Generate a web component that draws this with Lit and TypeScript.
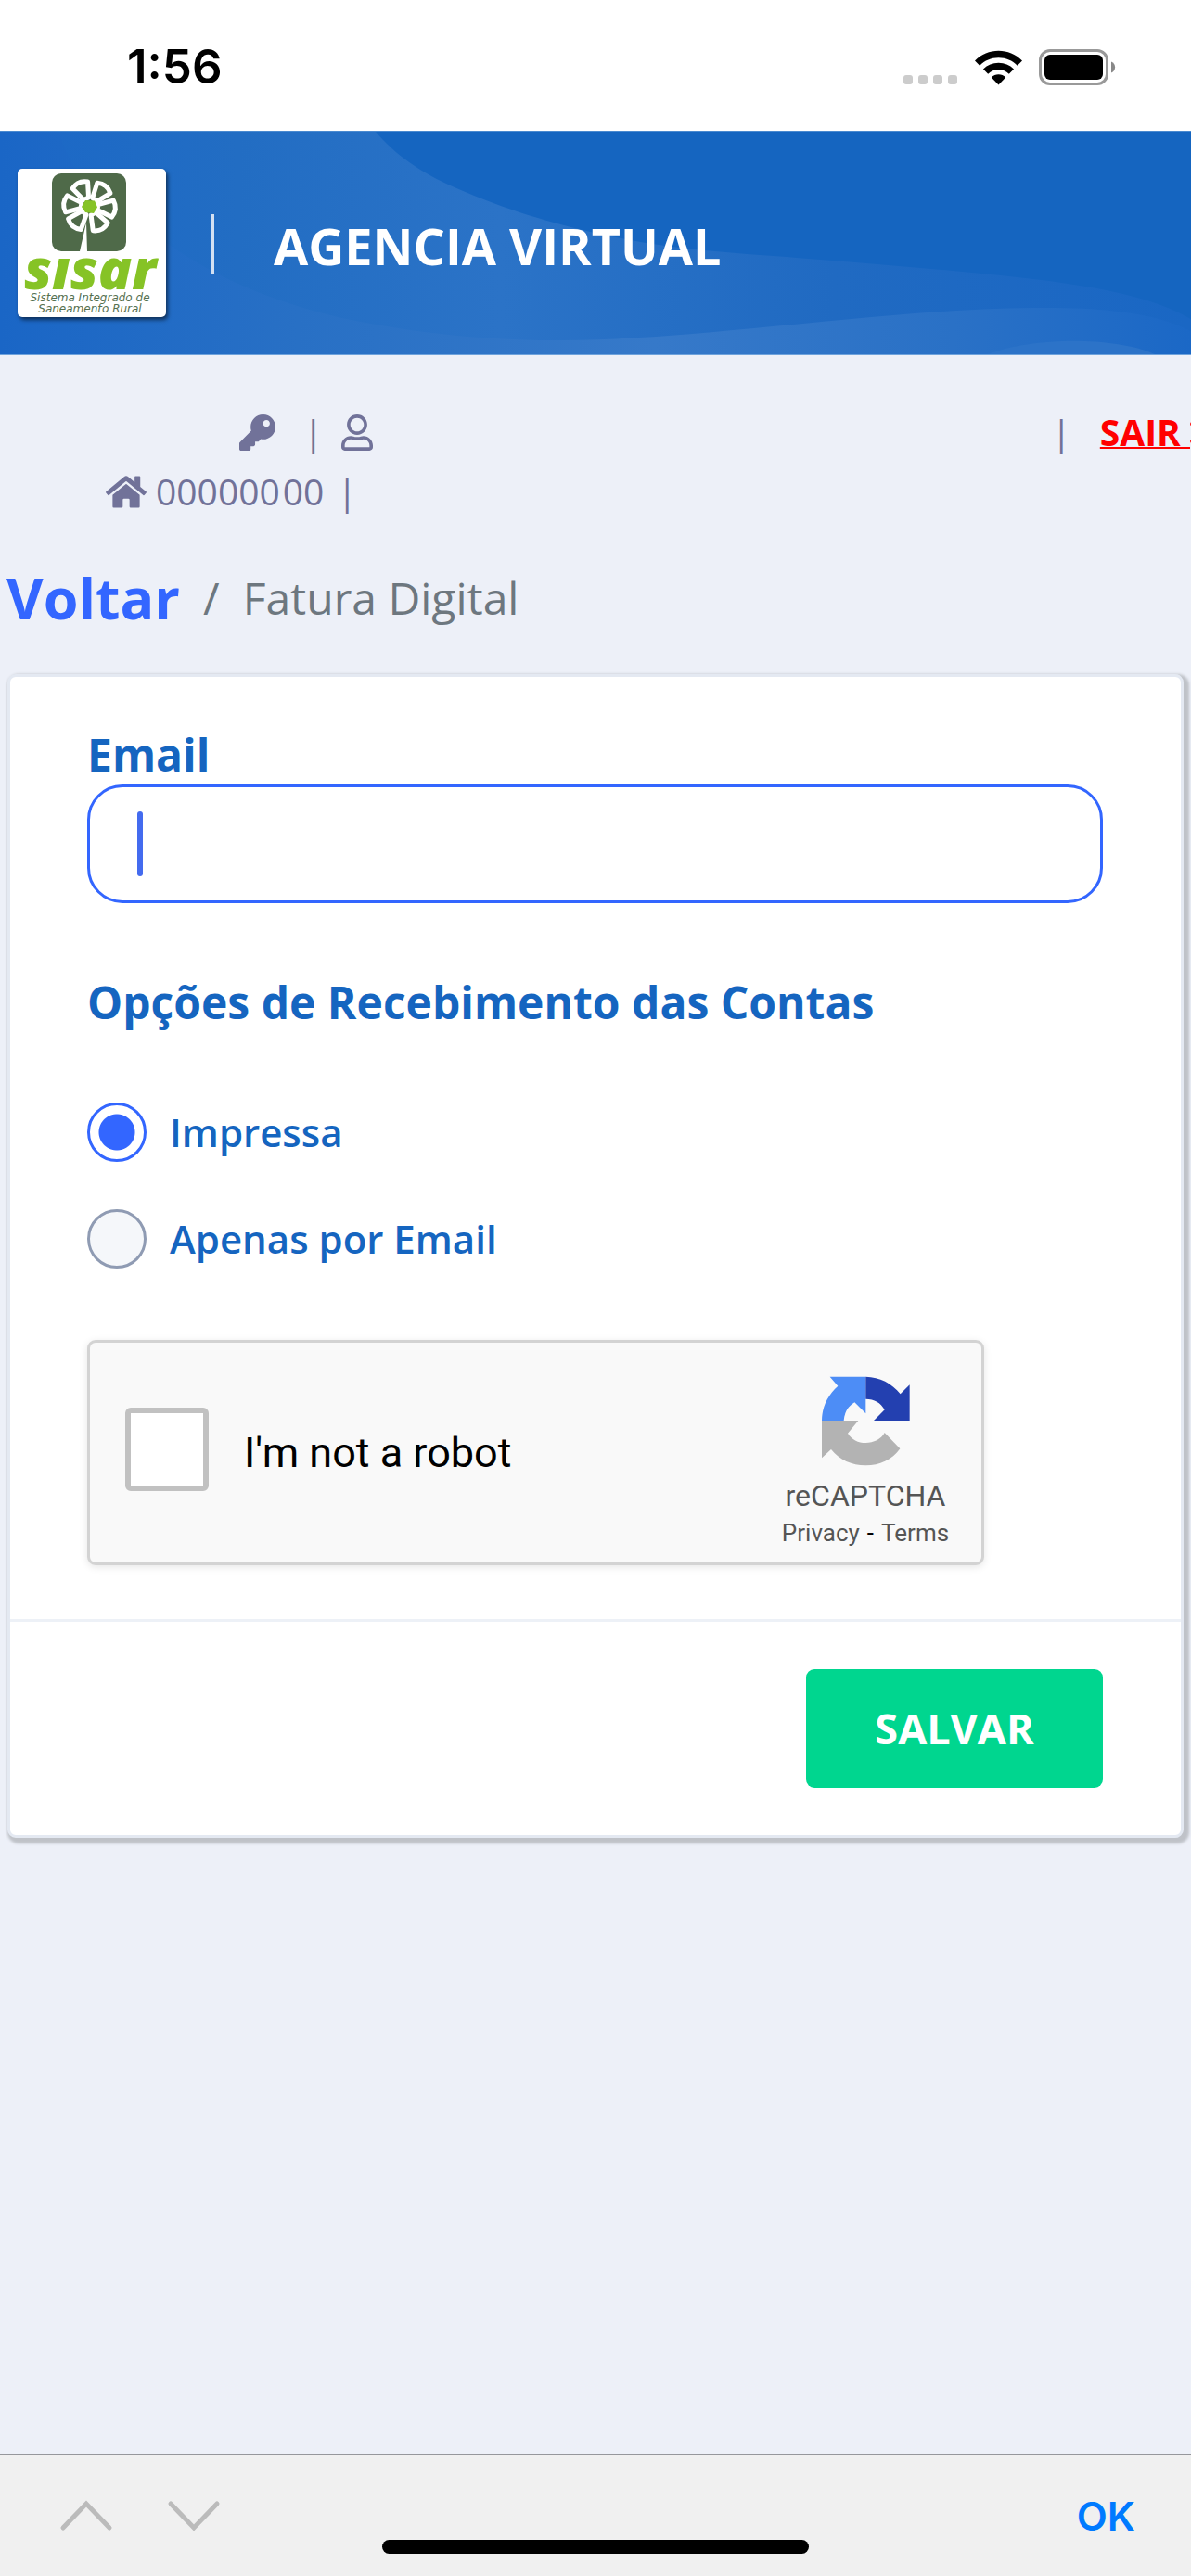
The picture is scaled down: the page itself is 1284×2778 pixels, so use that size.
import { LitElement, html, css, svg } from "lit";
import { customElement, state } from "lit/decorators.js";

const KEY_PATH =
  "M512 176.001C512 273.203 433.202 352 336 352c-11.22 0-22.19-1.062-32.827-3.069l-24.012 27.014A23.999 23.999 0 0 1 261.223 384H224v40c0 13.255-10.745 24-24 24h-40v40c0 13.255-10.745 24-24 24H24c-13.255 0-24-10.745-24-24v-78.059c0-6.365 2.529-12.47 7.029-16.971l161.802-161.802C163.108 213.814 160 195.271 160 176 160 78.798 238.797.001 335.999 0 433.488-.001 512 78.511 512 176.001zM336 128c0 26.51 21.49 48 48 48s48-21.49 48-48-21.49-48-48-48-48 21.49-48 48z";
const USER_PATH =
  "M313.6 304c-28.7 0-42.5 16-89.6 16-47.1 0-60.8-16-89.6-16C60.2 304 0 364.2 0 438.4V464c0 26.5 21.5 48 48 48h352c26.5 0 48-21.5 48-48v-25.6c0-74.2-60.2-134.4-134.4-134.4zM400 464H48v-25.6c0-47.6 38.8-86.4 86.4-86.4 14.6 0 38.3 16 89.6 16 51.7 0 74.9-16 89.6-16 47.6 0 86.4 38.8 86.4 86.4V464zM224 288c79.5 0 144-64.5 144-144S303.5 0 224 0 80 64.5 80 144s64.5 144 144 144zm0-240c52.9 0 96 43.1 96 96s-43.1 96-96 96-96-43.1-96-96 43.1-96 96-96z";
const HOME_PATH =
  "M280.37 148.26L96 300.11V464a16 16 0 0 0 16 16l112.06-.29a16 16 0 0 0 15.92-16V368a16 16 0 0 1 16-16h64a16 16 0 0 1 16 16v95.64a16 16 0 0 0 16 16.05L464 480a16 16 0 0 0 16-16V300L295.67 148.26a12.19 12.19 0 0 0-15.3 0zM571.6 251.47L488 182.56V44.05a12 12 0 0 0-12-12h-56a12 12 0 0 0-12 12v72.61L318.47 43a48 48 0 0 0-61 0L4.34 251.47a12 12 0 0 0-1.6 16.9l25.5 31A12 12 0 0 0 45.15 301l235.22-193.74a12.19 12.19 0 0 1 15.3 0L530.9 301a12 12 0 0 0 16.9-1.6l25.5-31a12 12 0 0 0-1.7-16.93z";
const TIMES_PATH =
  "M242.72 256l100.07-100.07c12.28-12.28 12.28-32.19 0-44.48l-22.24-22.24c-12.28-12.28-32.19-12.28-44.48 0L176 189.28 75.93 89.21c-12.28-12.28-32.19-12.28-44.48 0L9.21 111.45c-12.28 12.28-12.28 32.19 0 44.48L109.28 256 9.21 356.07c-12.28 12.28-12.28 32.19 0 44.48l22.24 22.24c12.28 12.28 32.2 12.28 44.48 0L176 322.72l100.07 100.07c12.28 12.28 32.2 12.28 44.48 0l22.24-22.24c12.28-12.28 12.28-32.19 0-44.48L242.72 256z";

@customElement("status-bar")
export class StatusBar extends LitElement {
  static styles = css`
    :host {
      display: flex;
      align-items: center;
      justify-content: space-between;
      height: 141px;
      padding: 2px 81px 0 137px;
      box-sizing: border-box;
      background: #fff;
      color: #000;
    }
    .time {
      font: 600 51px/60px Inter, "Liberation Sans", sans-serif;
    }
    .signals {
      display: flex;
      align-items: center;
      gap: 18px;
      padding-top: 2px;
    }
    svg {
      display: block;
    }
  `;

  render() {
    return html`
      <span class="time">1:56</span>
      <div class="signals">
        <svg width="59" height="38" viewBox="0 0 59 38" fill="#ccc" aria-hidden="true">
          ${[0, 16, 32, 48].map((x) => svg`<rect x=${x} y="27" width="10" height="10" rx="3" />`)}
        </svg>
        <svg width="51" height="38" viewBox="0 0 51 38" aria-hidden="true">
          <path d="M0 11.500C7 4.500 16 .8 25.500 .8S44 4.500 51 11.500L45.800 16.700C40.300 11.300 33.500 8.300 25.500 8.300S10.700 11.300 5.200 16.700Z" />
          <path d="M9 20.500C13.500 16 19 13.700 25.500 13.700S37.500 16 42 20.500L36.800 25.700C33.600 22.600 30 21 25.500 21S17.400 22.600 14.200 25.700Z" />
          <path d="M17.800 29.500C20 27.400 22.500 26.300 25.500 26.300S31 27.400 33.200 29.500L25.500 37.500Z" />
        </svg>
        <svg width="83" height="39" viewBox="0 0 83 39" aria-hidden="true">
          <rect x="1.500" y="1.500" width="72" height="36" rx="10.500" fill="none" stroke="#999" stroke-width="3" />
          <rect x="6" y="6" width="63" height="27" rx="6" />
          <path d="M78 13.500C83.500 15.500 83.500 23.500 78 25.500Z" fill="#888" />
        </svg>
      </div>
    `;
  }
}

@customElement("agency-header")
export class AgencyHeader extends LitElement {
  static styles = css`
    :host {
      display: block;
      font-family: "Open Sans", sans-serif;
    }
    .banner {
      position: relative;
      display: flex;
      align-items: center;
      height: 242px;
      box-sizing: border-box;
      padding: 0 19px;
      background: #1565c0;
      border-top: 1px solid #4a8ad0;
      border-bottom: 1px solid #6fa3dc;
    }
    .waves {
      position: absolute;
      inset: 0;
      width: 100%;
      height: 100%;
    }
    .logo,
    .divider,
    .title {
      position: relative;
    }
    .logo {
      display: block;
      border-radius: 5px;
      background: #fff;
      box-shadow: 2px 3px 4px rgba(0, 0, 0, 0.55);
    }
    .divider {
      width: 3px;
      height: 64px;
      margin: 2px 64px 0 49px;
      background: #d3e0f2;
    }
    .title {
      margin: 5px 0 0;
      color: #fff;
      font-size: 54px;
      font-weight: 700;
      line-height: 72px;
      white-space: nowrap;
    }
    .brand {
      font: italic 800 60px "Open Sans", sans-serif;
      fill: #86c326;
    }
    .tagline {
      font: italic 12px "DejaVu Sans", sans-serif;
      fill: #55704f;
    }
  `;

  render() {
    const petal = "M-3 -9L-9 -25Q0 -31 9 -25L3 -9Z";
    return html`
      <header class="banner">
        <svg class="waves" viewBox="0 141 1284 242" preserveAspectRatio="none" aria-hidden="true">
          <defs>
            <linearGradient id="upper" x1="0" x2="1">
              <stop offset="0" stop-color="#1b68c7" />
              <stop offset=".2" stop-color="#226dc3" />
              <stop offset=".42" stop-color="#2b73c7" />
              <stop offset=".7" stop-color="#206ac2" />
              <stop offset="1" stop-color="#1a67c4" />
            </linearGradient>
            <linearGradient id="lower" x1="0" x2="1">
              <stop offset="0" stop-color="#1a66c6" />
              <stop offset=".25" stop-color="#2870c5" />
              <stop offset=".55" stop-color="#3679c9" />
              <stop offset=".8" stop-color="#2a71c6" />
              <stop offset="1" stop-color="#1b68c6" />
            </linearGradient>
          </defs>
          <path fill="url(#upper)" d="M0 141H405C425 165 452 185 491 202C545 226 610 247 696 262C740 269 780 272 819 275C900 281 960 286 1024 292C1130 302 1230 312 1284 345V383H0Z" />
          <path fill="url(#lower)" d="M0 141H64C75 190 120 232 184 265C235 300 290 325 370 344C460 363 540 368 606 368C720 367 850 350 960 341C1060 332 1150 330 1200 336C1240 340 1265 348 1284 358V383H0Z" />
          <path fill="#2c73c8" d="M1065 383C1110 365 1200 363 1245 383Z" />
        </svg>
        <svg class="logo" width="160" height="160" viewBox="0 0 160 160" role="img" aria-label="Sisar">
          <rect x="37" y="5" width="80" height="84" rx="10" fill="#4f6a49" />
          <path d="M67 89L74 58L75 89Z" fill="#fff" />
          <g fill="#4f6a49" stroke="#fff" stroke-width="5" stroke-linejoin="round">
            ${[-24, 38, 96, 152, 220, 276].map(
              (a) => svg`<path d=${petal} transform="translate(77.500 40.500) rotate(${a})" />`
            )}
          </g>
          <path d="M73 34L83 34.500L86 41.500L82 48L73 47L69 41Z" fill="#86c326" />
          <text class="brand" x="7" y="130">sısar</text>
          <text class="tagline" x="78" y="143" text-anchor="middle">Sistema Integrado de</text>
          <text class="tagline" x="78" y="155" text-anchor="middle">Saneamento Rural</text>
        </svg>
        <span class="divider"></span>
        <h1 class="title">AGENCIA VIRTUAL</h1>
      </header>
    `;
  }
}

@customElement("account-strip")
export class AccountStrip extends LitElement {
  static styles = css`
    :host {
      display: block;
      overflow: hidden;
      padding-top: 51px;
      color: #717299;
      font: 400 39px/64px "Open Sans", sans-serif;
    }
    .row {
      display: flex;
      align-items: center;
      white-space: nowrap;
    }
    .user-row {
      padding-left: 258px;
    }
    .home-row {
      padding-left: 114px;
    }
    svg {
      display: block;
      fill: currentColor;
    }
    .user-row > .bar {
      margin: 0 20px 0 30px;
    }
    .home-row > .bar {
      margin-left: 14px;
    }
    .code {
      display: flex;
      gap: 3px;
      padding-left: 10px;
    }
    .exit {
      display: flex;
      align-items: center;
      margin: 0 -26px 0 auto;
    }
    .exit-link {
      display: flex;
      align-items: center;
      margin-left: 31px;
      color: #f00;
      font-weight: 700;
      white-space: pre;
      text-decoration: underline;
      text-decoration-thickness: 2px;
    }
    .crumbs {
      display: flex;
      align-items: center;
      gap: 25px;
      margin: 40px 0 39px;
      padding-left: 7px;
      color: #6d777f;
      font-size: 48px;
      line-height: 86px;
    }
    .back {
      color: #36f;
      font-size: 61px;
      font-weight: 700;
      text-decoration: none;
    }
  `;

  render() {
    return html`
      <div class="row user-row">
        <svg width="39" height="39" viewBox="0 0 512 512" aria-hidden="true"><path d=${KEY_PATH} /></svg>
        <span class="bar">|</span>
        <svg width="34" height="39" viewBox="0 0 448 512" aria-hidden="true"><path d=${USER_PATH} /></svg>
        <div class="exit">
          <span>|</span>
          <a class="exit-link" href="#sair"><span>SAIR </span><svg width="27" height="39" viewBox="0 0 352 512" aria-hidden="true"><path d=${TIMES_PATH} /></svg></a>
        </div>
      </div>
      <div class="row home-row">
        <svg width="44" height="39" viewBox="0 0 576 512" aria-hidden="true"><path d=${HOME_PATH} /></svg>
        <span class="code"><span>000000</span><span>00</span></span>
        <span class="bar">|</span>
      </div>
      <nav class="crumbs">
        <a class="back" href="#voltar">Voltar</a>
        <span>/</span>
        <span>Fatura Digital</span>
      </nav>
    `;
  }
}

@customElement("captcha-box")
export class CaptchaBox extends LitElement {
  static styles = css`
    :host {
      display: flex;
      align-items: center;
      width: 967px;
      max-width: 100%;
      height: 243px;
      box-sizing: border-box;
      padding: 0 24px 0 38px;
      border: 3px solid #d3d3d3;
      border-radius: 9px;
      background: #f9f9f9;
      box-shadow: 0 2px 8px rgba(0, 0, 0, 0.1);
      color: #555;
      font-family: Roboto, sans-serif;
    }
    .check {
      appearance: none;
      width: 90px;
      height: 90px;
      margin: 0 38px 8px 0;
      border: 6px solid #c1c1c1;
      border-radius: 6px;
      background: #fff;
    }
    .label {
      color: #000;
      font-size: 45px;
      line-height: 54px;
    }
    .mark {
      display: flex;
      flex-direction: column;
      align-items: center;
      width: 202px;
      margin-left: auto;
      padding-top: 22px;
    }
    .name,
    .links {
      line-height: 36px;
      white-space: nowrap;
    }
    .name {
      margin: 12px 0 4px;
      font-size: 32px;
    }
    .links {
      display: flex;
      gap: 8px;
      color: #000;
      font-size: 26px;
    }
    .links a {
      color: #555;
      text-decoration: none;
    }
  `;

  render() {
    return html`
      <input class="check" id="human" type="checkbox" />
      <label class="label" for="human">I'm not a robot</label>
      <div class="mark">
        <svg width="97" height="99" viewBox="255 129 291 297" aria-hidden="true">
          <path fill="#4d8df6" d="M284 131H400V250L364 214C345 225 331 245 329 273H258C258 230 277 190 310 161Z" />
          <path fill="#2340b0" d="M400 131C445 132 485 152 512 187L542 157V273H426L461 238C448 214 428 204 400 203Z" />
          <path fill="#b3b3b3" d="M258 273H376L342 314C355 335 375 345 400 345C425 345 450 333 461 312L511 364C485 400 445 418 400 418C355 418 315 400 288 366L258 394Z" />
        </svg>
        <div class="name">reCAPTCHA</div>
        <div class="links"><a href="#privacy">Privacy</a><span>-</span><a href="#terms">Terms</a></div>
      </div>
    `;
  }
}

@customElement("invoice-form")
export class InvoiceForm extends LitElement {
  @state() private delivery = "print";

  static styles = css`
    :host {
      display: block;
      margin: 0 8px;
      border: 3px solid #e4e9f2;
      border-radius: 9px;
      background: #fff;
      box-shadow: 3px 3px 3px 3px #bfc2c8;
      color: #1565c0;
      font-family: "Open Sans", sans-serif;
    }
    .body {
      padding: 52px 84px 58px 83px;
    }
    .email-label,
    .heading {
      display: block;
      margin: 0;
      font-size: 48px;
      font-weight: 700;
      line-height: 64px;
    }
    .field {
      position: relative;
      margin-bottom: 75px;
    }
    .email {
      display: block;
      width: 100%;
      height: 128px;
      box-sizing: border-box;
      padding: 0 51px;
      border: 3px solid #36f;
      border-radius: 38px;
      outline: none;
      background: #fff;
      caret-color: #4169f0;
      color: #222b45;
      font: 600 45px/72px "Open Sans", sans-serif;
    }
    .caret {
      position: absolute;
      left: 54px;
      top: 29px;
      width: 6px;
      height: 70px;
      border-radius: 3px;
      background: #446bef;
    }
    .options {
      display: flex;
      flex-direction: column;
      gap: 51px;
      margin: 76px 0 77px;
    }
    .option {
      display: flex;
      align-items: center;
      gap: 25px;
      font-size: 42px;
      font-weight: 600;
      line-height: 64px;
    }
    .radio {
      appearance: none;
      width: 64px;
      height: 64px;
      margin: 0;
      border: 3px solid #8f9bb3;
      border-radius: 50%;
      background: #f5f7fa;
    }
    .radio:checked {
      border-color: #36f;
      background: radial-gradient(circle, #36f 19px, #fff 20px);
    }
    .footer {
      display: flex;
      justify-content: flex-end;
      padding: 51px 84px 51px 83px;
      border-top: 3px solid #edf1f7;
    }
    .save {
      width: 320px;
      height: 128px;
      border: 0;
      border-radius: 9px;
      background: #00d68f;
      color: #fff;
      font: 700 45px/64px "Open Sans", sans-serif;
    }
  `;

  private option(value: string, label: string) {
    return html`
      <label class="option">
        <input
          class="radio"
          type="radio"
          name="delivery"
          .checked=${this.delivery === value}
          @change=${() => (this.delivery = value)}
        />
        <span>${label}</span>
      </label>
    `;
  }

  render() {
    return html`
      <form @submit=${(e: Event) => e.preventDefault()}>
        <div class="body">
          <label class="email-label" for="email">Email</label>
          <div class="field">
            <input class="email" id="email" type="email" />
            <span class="caret"></span>
          </div>
          <h2 class="heading">Opções de Recebimento das Contas</h2>
          <div class="options">
            ${this.option("print", "Impressa")} ${this.option("email", "Apenas por Email")}
          </div>
          <captcha-box></captcha-box>
        </div>
        <div class="footer">
          <button class="save" type="submit">SALVAR</button>
        </div>
      </form>
    `;
  }
}

@customElement("keyboard-bar")
export class KeyboardBar extends LitElement {
  static styles = css`
    :host {
      position: relative;
      display: flex;
      align-items: center;
      gap: 56px;
      padding: 34px 60px 33px 63px;
      border-top: 1px solid #96979c;
      background: #f0f0f0;
    }
    button {
      height: 64px;
      padding: 0;
      border: 0;
      background: none;
    }
    svg {
      display: block;
    }
    .ok {
      margin-left: auto;
      color: #007aff;
      font: 600 43px/64px Inter, "Liberation Sans", sans-serif;
    }
    .home {
      position: absolute;
      right: 0;
      bottom: 24px;
      left: 0;
      width: 460px;
      max-width: 60%;
      height: 15px;
      margin: 0 auto;
      border-radius: 8px;
      background: #000;
    }
  `;

  render() {
    return html`
      <button aria-label="Anterior">
        <svg width="60" height="36" viewBox="0 0 60 36" fill="none" stroke="#bbb" stroke-width="5" stroke-linecap="round">
          <path d="M5 31L30 5L55 31" />
        </svg>
      </button>
      <button aria-label="Próximo">
        <svg width="60" height="36" viewBox="0 0 60 36" fill="none" stroke="#bbb" stroke-width="5" stroke-linecap="round">
          <path d="M5 5L30 31L55 5" />
        </svg>
      </button>
      <button class="ok">OK</button>
      <span class="home"></span>
    `;
  }
}

@customElement("app-root")
export class AppRoot extends LitElement {
  static styles = css`
    :host {
      display: flex;
      flex-direction: column;
      min-height: 100vh;
      background: #edf0f8;
    }
    .content {
      flex: 1;
    }
  `;

  render() {
    return html`
      <status-bar></status-bar>
      <agency-header></agency-header>
      <main class="content">
        <account-strip></account-strip>
        <invoice-form></invoice-form>
      </main>
      <keyboard-bar></keyboard-bar>
    `;
  }
}
